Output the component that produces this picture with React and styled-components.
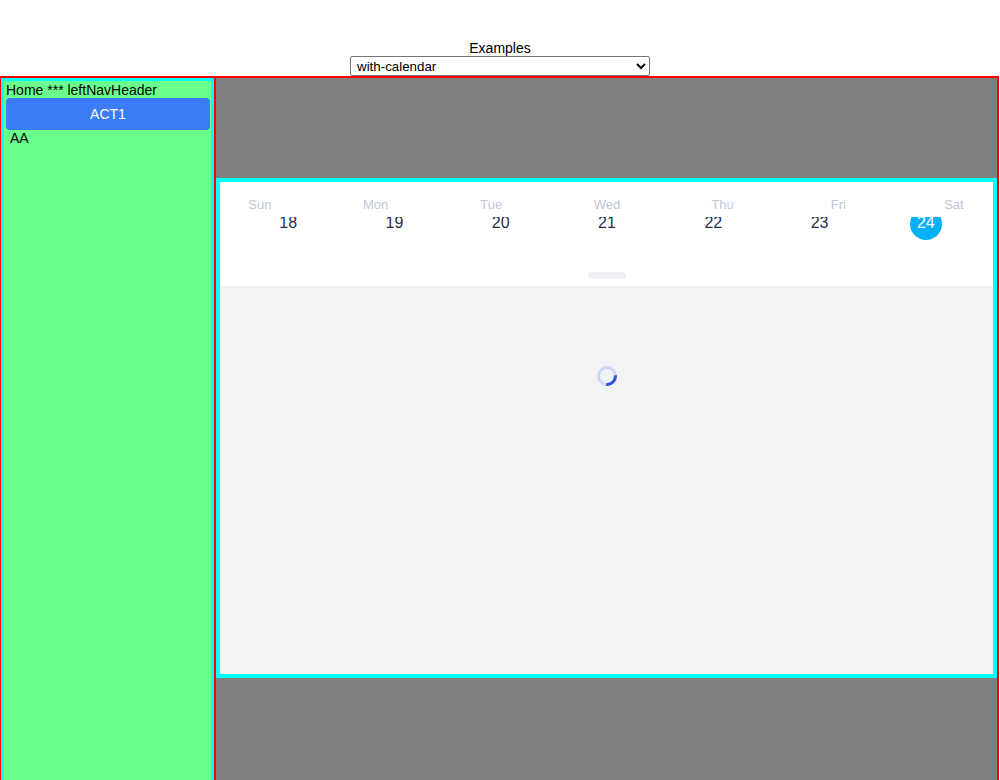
import React from "react";
import styled, { createGlobalStyle } from "styled-components";

const GlobalStyle = createGlobalStyle`
  html, body {
    margin: 0;
    padding: 0;
    background: #ffffff;
    font-family: "Liberation Sans", Arial, sans-serif;
    font-size: 14px;
    overflow: hidden;
  }
`;

const PageHeader = styled.div`
  height: 76px;
  box-sizing: border-box;
  padding-top: 40px;
  display: flex;
  flex-direction: column;
  align-items: center;
`;

const ExamplesLabel = styled.div`
  font-size: 14px;
  line-height: 16px;
  color: #000;
`;

const ExampleSelect = styled.select`
  width: 300px;
  height: 20px;
  box-sizing: border-box;
  font-family: "Liberation Sans", Arial, sans-serif;
  font-size: 13.33px;
  color: #000;
  background: #fff;
  border: 1px solid #767676;
  border-radius: 2px;
  padding: 0 2px;
`;

const Frame = styled.div`
  display: flex;
  width: 1000px;
  min-height: 720px;
  margin-left: -1px;
  box-sizing: border-box;
  border: 2px solid #ff0000;
`;

const LeftNav = styled.nav`
  width: 213px;
  flex-shrink: 0;
  box-sizing: border-box;
  border: 3px solid #00ffff;
  background: #6bff8e;
  padding: 1px 1px 0 2px;
`;

const NavHeader = styled.div`
  line-height: 16px;
  color: #000;
`;

const NavButton = styled.button`
  display: block;
  width: 204px;
  height: 32px;
  border: none;
  border-radius: 4px;
  background: #3b7cf6;
  color: #fff;
  font-family: "Liberation Sans", Arial, sans-serif;
  font-size: 14px;
`;

const NavItem = styled.div`
  line-height: 16px;
  padding-left: 4px;
  color: #000;
`;

const Stage = styled.main`
  flex: 1;
  min-width: 0;
  background: #808080;
  border-left: 2px solid #ff0000;
  padding-top: 100px;
`;

const CalendarCard = styled.div`
  height: 500px;
  box-sizing: border-box;
  border: 4px solid #00ffff;
  background: #f2f3f5;
  display: flex;
  flex-direction: column;
  overflow: hidden;
`;

const CalendarHead = styled.div`
  background: #fff;
  padding: 15px 0 7px;
  display: flex;
  flex-direction: column;
  overflow: hidden;
`;

const WeekRow = styled.div`
  display: grid;
  grid-template-columns: repeat(7, 115.7px);
  margin-left: -18px;
`;

const WeekDay = styled.div`
  text-align: center;
  font-size: 13px;
  line-height: 15px;
  color: #c0c6d8;
`;

const DatesViewport = styled.div`
  margin-top: 5px;
  height: 40px;
  overflow: hidden;
`;

const DateRow = styled.div`
  display: grid;
  grid-template-columns: repeat(7, 1fr);
  padding: 0 14px 0 15px;
  margin-top: -9px;
`;

const DateCell = styled.div`
  display: flex;
  justify-content: center;
`;

const DateNum = styled.span`
  width: 32px;
  height: 32px;
  line-height: 30px;
  text-align: center;
  border-radius: 50%;
  font-size: 16px;
  color: ${(p) => (p.$active ? "#ffffff" : "#24304f")};
  background: ${(p) => (p.$active ? "#03b1f7" : "transparent")};
`;

const DragHandle = styled.div`
  align-self: center;
  width: 38px;
  height: 7px;
  margin-top: 15px;
  border-radius: 4px;
  background: #eef0f3;
`;

const CalendarBody = styled.div`
  flex: 1;
  display: flex;
  justify-content: center;
  padding-top: 80px;
`;

const Spinner = () => (
  <svg width="20" height="20" viewBox="0 0 20 20">
    <circle cx="10" cy="10" r="8.5" fill="none" stroke="#c9d9f5" strokeWidth="3" />
    <path d="M18.47 9.26 A8.5 8.5 0 0 1 9.26 18.47" fill="none" stroke="#2d52dc" strokeWidth="3" />
  </svg>
);

const weekDays = ["Sun", "Mon", "Tue", "Wed", "Thu", "Fri", "Sat"];
const dates = [18, 19, 20, 21, 22, 23, 24];

export default function App() {
  return (
    <>
      <GlobalStyle />
      <PageHeader>
        <ExamplesLabel>Examples</ExamplesLabel>
        <ExampleSelect defaultValue="with-calendar">
          <option value="with-calendar">with-calendar</option>
        </ExampleSelect>
      </PageHeader>

      <Frame>
        <LeftNav>
          <NavHeader>Home *** leftNavHeader</NavHeader>
          <NavButton>ACT1</NavButton>
          <NavItem>AA</NavItem>
        </LeftNav>

        <Stage>
          <CalendarCard>
            <CalendarHead>
              <WeekRow>
                {weekDays.map((d) => (
                  <WeekDay key={d}>{d}</WeekDay>
                ))}
              </WeekRow>
              <DatesViewport>
                <DateRow>
                  {dates.map((n) => (
                    <DateCell key={n}>
                      <DateNum $active={n === 24}>{n}</DateNum>
                    </DateCell>
                  ))}
                </DateRow>
              </DatesViewport>
              <DragHandle />
            </CalendarHead>
            <CalendarBody>
              <Spinner />
            </CalendarBody>
          </CalendarCard>
        </Stage>
      </Frame>
    </>
  );
}
